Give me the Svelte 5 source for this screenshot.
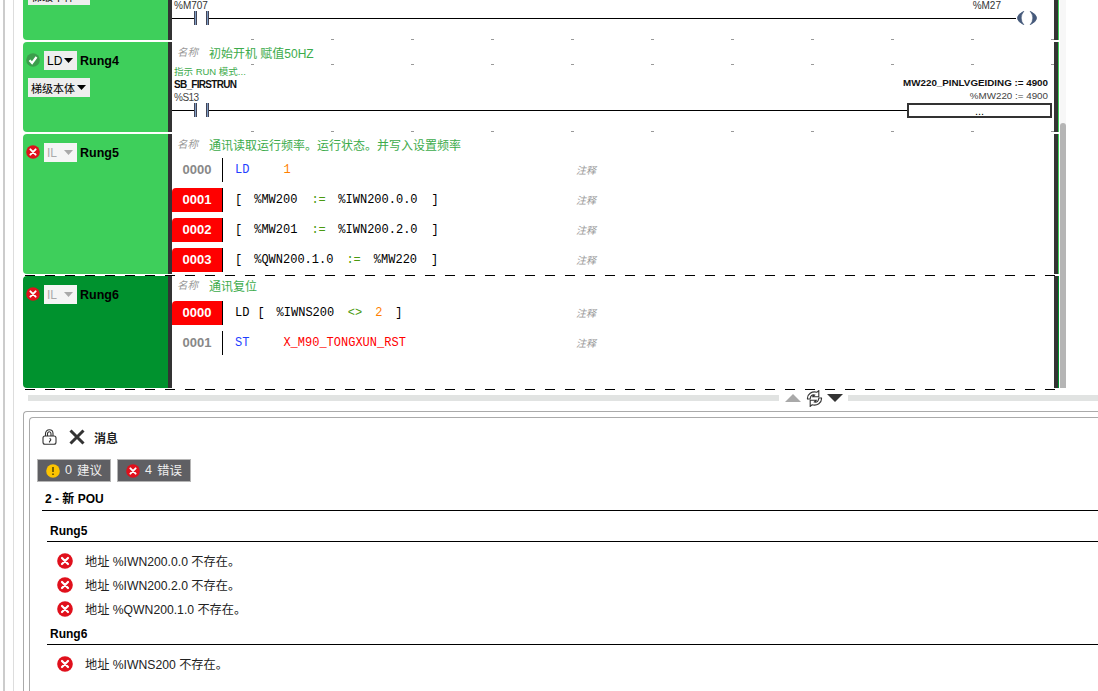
<script>
	const ticks = Array(11).fill(0);

	const rung5 = [
		{ no: '0000', bad: false, parts: [['kw', 'LD', 34], ['num', '1', 0]] },
		{ no: '0001', bad: true, parts: [['', '[', 12], ['', '%MW200', 14], ['op', ':=', 12.5], ['', '%IWN200.0.0', 14], ['', ']', 0]] },
		{ no: '0002', bad: true, parts: [['', '[', 12], ['', '%MW201', 14], ['op', ':=', 12.5], ['', '%IWN200.2.0', 14], ['', ']', 0]] },
		{ no: '0003', bad: true, parts: [['', '[', 12], ['', '%QWN200.1.0', 13], ['op', ':=', 13], ['', '%MW220', 14], ['', ']', 0]] }
	];
	const rung6 = [
		{ no: '0000', bad: true, parts: [['', 'LD', 8], ['', '[', 12], ['', '%IWNS200', 13.5], ['op', '<>', 13], ['num', '2', 13], ['', ']', 0]] },
		{ no: '0001', bad: false, parts: [['kw', 'ST', 34], ['var', 'X_M90_TONGXUN_RST', 0]] }
	];
	const errors5 = ['地址 %IWN200.0.0 不存在。', '地址 %IWN200.2.0 不存在。', '地址 %QWN200.1.0 不存在。'];
</script>

{#snippet errIcon(size)}
	<svg width={size} height={size} viewBox="0 0 16 16" class="ico">
		<circle cx="8" cy="8" r="7.8" fill="#e0101c" />
		<path d="M5 5l6 6M11 5l-6 6" stroke="#fff" stroke-width="2.2" stroke-linecap="round" />
	</svg>
{/snippet}

{#snippet caret(color)}
	<svg width="9" height="5" viewBox="0 0 9 5" class="ico"><path d="M0 0h9L4.5 5z" fill={color} /></svg>
{/snippet}

{#snippet tickRow()}
	<div class="ticks">
		{#each ticks as _}<i></i>{/each}
	</div>
{/snippet}

{#snippet contact()}
	<div class="contact"><b></b><b></b></div>
{/snippet}

{#snippet ilRows(rows)}
	{#each rows as row}
		<div class="ilrow">
			<div class="no" class:bad={row.bad}>{row.no}</div>
			<div class="code">
				{#each row.parts as p}
					<span class={p[0]} style="margin-right:{p[2]}px">{p[1]}</span>
				{/each}
			</div>
			<div class="note">注释</div>
		</div>
	{/each}
{/snippet}

<div class="page">
	<div class="guide1">
		<div class="guide2">
			<div class="editor">
				<div class="rungs">
					<!-- rung 3, scrolled partly off the top -->
					<div class="rung r3">
						<div class="side">
							<div class="sel wide clipped">梯级本体 {@render caret('#000')}</div>
						</div>
						<div class="body">
							<div class="labels3"><span>%M707</span><span>%M27</span></div>
							<div class="wire">
								<div class="seg"></div>
								{@render contact()}
								<div class="line"></div>
								<svg class="coil" width="22" height="14" viewBox="0 0 22 14">
									<path d="M8 0Q-5.5 7 8 14Q2.5 7 8 0zM14 0Q27.5 7 14 14Q19.5 7 14 0z" fill="#45597a" stroke="#45597a" stroke-width="0.5" />
								</svg>
							</div>
							{@render tickRow()}
						</div>
						<div class="rbar"></div>
					</div>

					<div class="rung r4">
						<div class="side">
							<div class="head">
								<svg width="14" height="14" viewBox="0 0 14 14" class="ico">
									<circle cx="7" cy="7" r="6.8" fill="#3b9e4c" />
									<path d="M3.5 7.2l2.6 2.8 4.4-6" stroke="#fff" stroke-width="2.2" fill="none" />
								</svg>
								<div class="sel">LD {@render caret('#000')}</div>
								<strong>Rung4</strong>
							</div>
							<div class="sel wide">梯级本体 {@render caret('#000')}</div>
						</div>
						<div class="body">
							<div class="name n4"><em>名称</em><span>初始开机 赋值50HZ</span></div>
							{@render tickRow()}
							<div class="blocklabels">
								<div class="lbl-left">
									<div class="hint">指示 RUN 模式...</div>
									<div class="sym">SB_FIRSTRUN</div>
									<div class="addr">%S13</div>
								</div>
								<div class="lbl-right">
									<div class="sym">MW220_PINLVGEIDING := 4900</div>
									<div class="addr">%MW220 := 4900</div>
								</div>
							</div>
							<div class="wire w4">
								<div class="seg"></div>
								{@render contact()}
								<div class="line"></div>
								<div class="fb">...</div>
							</div>
							{@render tickRow()}
						</div>
						<div class="rbar"></div>
					</div>

					<div class="rung r5">
						<div class="side">
							<div class="head">
								{@render errIcon(14)}
								<div class="sel off">IL {@render caret('#aaa')}</div>
								<strong>Rung5</strong>
							</div>
						</div>
						<div class="body">
							<div class="name n5"><em>名称</em><span>通讯读取运行频率。运行状态。并写入设置频率</span></div>
							{@render ilRows(rung5)}
						</div>
						<div class="rbar"></div>
					</div>

					<div class="dash"></div>

					<div class="rung r6">
						<div class="side">
							<div class="head">
								{@render errIcon(14)}
								<div class="sel off">IL {@render caret('#aaa')}</div>
								<strong>Rung6</strong>
							</div>
						</div>
						<div class="body">
							<div class="name n6"><em>名称</em><span>通讯复位</span></div>
							{@render ilRows(rung6)}
						</div>
						<div class="rbar"></div>
					</div>

					<div class="dash"></div>
				</div>

				<div class="track"><div class="thumb"></div></div>
			</div>

			<div class="splitter">
				<div class="bar b1"></div>
				<svg width="16" height="8" viewBox="0 0 16 8"><path d="M8 0l8 8H0z" fill="#a9a9a9" /></svg>
				<svg width="17" height="17" viewBox="0 0 17 17">
					<g fill="#fff" stroke="#333" stroke-width="1.1">
						<path d="M1.5 9C1 4 6 .8 11 2.2L12.8 .6V6.8H6.8L8.6 5C6 4.4 4.2 6 4.2 9z" />
						<path d="M15.5 8C16 13 11 16.2 6 14.8L4.2 16.4V10.2H10.2L8.4 12C11 12.6 12.8 11 12.8 8z" />
					</g>
				</svg>
				<svg width="16" height="8" viewBox="0 0 16 8"><path d="M0 0h16L8 8z" fill="#333" /></svg>
				<div class="bar b2"></div>
			</div>

			<div class="outer">
				<div class="inner">
					<div class="msghead">
						<svg width="15" height="16" viewBox="0 0 15 16" fill="none" stroke="#333" stroke-width="1.1">
							<path d="M3.5 7V4.5C3.5 2.3 5.2 .8 7.3 .8S11 2.3 11 4.5V7" />
							<path d="M5.5 7V4.8C5.5 3.6 6.3 2.8 7.3 2.8S9 3.6 9 4.8V7" />
							<rect x="1" y="7" width="13" height="8.3" rx="2" fill="#fff" />
							<path d="M7.5 9.5a1.3 1.3 0 1 1-.1 2.6M7.5 12v1.5" />
						</svg>
						<svg class="close" width="16" height="16" viewBox="0 0 16 16"><path d="M1.5 1.5l13 13M14.5 1.5l-13 13" stroke="#333" stroke-width="3" /></svg>
						<strong>消息</strong>
					</div>

					<div class="badges">
						<div class="badge">
							<svg width="14" height="14" viewBox="0 0 14 14" class="ico">
								<circle cx="7" cy="7" r="6.8" fill="#fdc400" />
								<path d="M7 3v5M7 9.5v1.6" stroke="#5a4a00" stroke-width="1.6" />
							</svg>
							<span>0</span><span>建议</span>
						</div>
						<div class="badge">
							{@render errIcon(14)}
							<span>4</span><span>错误</span>
						</div>
					</div>

					<div class="pou">2 - 新 POU</div>

					<div class="group g5">Rung5</div>
					<div class="msgs">
						{#each errors5 as text}
							<div class="msg">{@render errIcon(16)}<span>{text}</span></div>
						{/each}
					</div>

					<div class="group g6">Rung6</div>
					<div class="msgs">
						<div class="msg">{@render errIcon(16)}<span>地址 %IWNS200 不存在。</span></div>
					</div>
				</div>
			</div>
		</div>
	</div>
</div>

<style>
	:global(body) {
		background: #fff;
	}
	.page {
		width: 1098px;
		height: 691px;
		overflow: hidden;
		font-family: 'Liberation Sans', 'Noto Sans CJK SC', sans-serif;
		font-size: 12px;
		color: #000;
		display: flex;
	}
	.ico {
		flex: none;
		display: inline-block;
	}
	.guide1 {
		margin-left: 3px;
		border-left: 2px solid #ccc;
		padding-left: 8px;
		display: flex;
	}
	.guide2 {
		border-left: 1px solid #ddd;
		padding-left: 9px;
		display: flex;
		flex-direction: column;
		width: 1200px;
	}
	.editor {
		display: flex;
		width: 1043px;
	}
	.rungs {
		width: 1037px;
		flex: none;
	}
	.track {
		width: 6px;
		height: 388px;
		background: #f7f7f7;
		display: flex;
		flex-direction: column;
		justify-content: flex-end;
	}
	.thumb {
		height: 265px;
		background: #b5b5b5;
		border-radius: 3px 3px 0 0;
	}

	.rung {
		display: flex;
		--green: #3ecf5b;
	}
	.r3 {
		height: 40px;
		margin-bottom: 2px;
	}
	.r4 {
		height: 90px;
		margin-bottom: 2px;
	}
	.r5 {
		height: 140px;
	}
	.r6 {
		height: 112px;
		--green: #00922e;
	}
	.dash {
		height: 2px;
		padding-top: 1px;
		box-sizing: border-box;
		background: repeating-linear-gradient(90deg, #000 0 10px, transparent 10px 20px) content-box;
		background-position: 2px 0;
		width: 1035px;
	}
	.side {
		width: 145px;
		flex: none;
		background: var(--green);
		border-radius: 4px 0 0 4px;
		padding: 9px 0 0 3px;
		box-sizing: border-box;
	}
	.r3 .side {
		border-radius: 0 0 0 4px;
		padding-top: 0;
	}
	.body {
		width: 882px;
		flex: none;
		border-left: 4px solid #333;
	}
	.rbar {
		width: 4px;
		flex: none;
		background: #333;
		border-right: 1px solid var(--green);
	}
	.head {
		display: flex;
		align-items: flex-start;
		height: 19px;
	}
	.head > svg {
		margin-top: 2px;
	}
	.head strong {
		margin-left: 3px;
		margin-top: 3px;
		font-size: 12.5px;
	}
	.sel {
		display: flex;
		align-items: center;
		justify-content: space-between;
		box-sizing: border-box;
		width: 33px;
		height: 19px;
		padding: 0 4px 0 3px;
		margin-left: 4px;
		background: #eee;
		font-size: 12px;
	}
	.sel.off {
		background: #f5f5f5;
		color: #aaa;
	}
	.sel.wide {
		width: 62px;
		margin: 8px 0 0 2px;
		font-size: 11px;
	}
	.sel.clipped {
		margin-top: -14px;
	}

	.ticks {
		height: 1px;
		display: flex;
		gap: 77px;
		padding-left: 79px;
	}
	.ticks i {
		width: 3px;
		height: 1px;
		background: #999;
		flex: none;
	}
	.labels3 {
		height: 11px;
		display: flex;
		justify-content: space-between;
		padding: 0 53px 0 2px;
		font-size: 10px;
		line-height: 11px;
		color: #333;
	}
	.wire {
		height: 14px;
		display: flex;
		align-items: center;
		margin-bottom: 14px;
	}
	.seg {
		width: 22px;
		height: 1px;
		background: #000;
		flex: none;
	}
	.line {
		flex: 1;
		height: 1px;
		background: #000;
	}
	.contact {
		width: 15px;
		height: 14px;
		display: flex;
		justify-content: space-between;
		flex: none;
	}
	.contact b {
		width: 3px;
		box-sizing: border-box;
		background: #7d9dc4;
		border: 1px solid #445;
		border-width: 0 1px;
	}
	.coil {
		flex: none;
		margin-right: 16px;
	}

	.name {
		height: 22px;
		box-sizing: border-box;
		display: flex;
		align-items: center;
		padding-left: 5px;
	}
	.n4 {
		padding-bottom: 2px;
	}
	.n5 {
		height: 24px;
		padding-bottom: 4px;
	}
	.n6 {
		height: 25px;
		padding-bottom: 6px;
	}
	.name em {
		width: 32px;
		margin-top: -2px;
		font-size: 10.5px;
		color: #999;
		flex: none;
	}
	.name span {
		font-size: 12px;
		color: #3cab4b;
	}
	.blocklabels {
		height: 38px;
		display: flex;
		justify-content: space-between;
		padding: 0 6px 0 2px;
		font-size: 9.8px;
		line-height: 13px;
	}
	.hint {
		color: #3cab4b;
		font-size: 9.5px;
		height: 13px;
	}
	.sym {
		font-weight: bold;
		color: #111;
	}
	.addr {
		color: #444;
	}
	.lbl-left .sym {
		font-size: 10px;
		letter-spacing: -0.7px;
	}
	.lbl-left .addr {
		font-size: 10px;
		letter-spacing: -0.5px;
	}
	.lbl-right {
		text-align: right;
		padding-top: 11px;
	}
	.fb {
		box-sizing: border-box;
		width: 145px;
		height: 15px;
		margin-right: 2px;
		border: 2px solid #333;
		text-align: center;
		font-size: 11px;
		line-height: 12px;
		flex: none;
	}

	.ilrow {
		height: 24px;
		display: flex;
		align-items: center;
		margin-bottom: 6px;
	}
	.r5 .ilrow:first-of-type {
		margin-bottom: 5px;
	}
	.no {
		width: 50px;
		height: 24px;
		border-right: 1px solid #000;
		border-radius: 4px 0 0 0;
		text-align: center;
		line-height: 24px;
		font-size: 13px;
		font-weight: bold;
		color: #888;
		flex: none;
	}
	.no.bad {
		background: #ff0000;
		color: #fff;
	}
	.code {
		width: 341px;
		padding-left: 12px;
		display: flex;
		font-family: 'Liberation Mono', monospace;
		font-size: 12px;
		flex: none;
		white-space: pre;
	}
	.kw {
		color: #1f3fff;
	}
	.num {
		color: #ff7f00;
	}
	.op {
		color: #4b9a10;
	}
	.var {
		color: #f00;
	}
	.note {
		margin-top: -1px;
		font-size: 10px;
		font-style: italic;
		color: #999;
	}

	.splitter {
		height: 16px;
		margin: 0 0 5px 5px;
		display: flex;
		align-items: center;
		width: 1070px;
		flex: none;
	}
	.bar {
		height: 6px;
		background: #e1e3e2;
	}
	.b1 {
		width: 751px;
		margin-right: 6px;
	}
	.b2 {
		flex: 1;
		margin-left: 5px;
	}
	.splitter svg:nth-of-type(2) {
		margin: 0 4px 0 5px;
	}

	.outer {
		flex: 1;
		display: flex;
		border: 1px solid #aaa;
		border-width: 1px 0 0 1px;
		border-radius: 4px 0 0 0;
		padding: 5px 0 0 5px;
	}
	.inner {
		flex: 1;
		border: 1px solid #aaa;
		border-width: 1px 0 0 1px;
		border-radius: 4px 0 0 0;
		padding: 11px 0 0 12px;
	}
	.msghead {
		height: 16px;
		display: flex;
		align-items: center;
	}
	.close {
		margin: 0 9px 0 12px;
	}
	.msghead strong {
		font-size: 12px;
		color: #222;
	}
	.badges {
		display: flex;
		gap: 6px;
		margin: 14px 0 0 -5px;
	}
	.badge {
		box-sizing: border-box;
		width: 74px;
		height: 23px;
		background: #5f5f63;
		border: 1px solid #b5b5b5;
		display: flex;
		align-items: center;
		gap: 5px;
		padding: 0 0 2px 8px;
		color: #eee;
		font-size: 12.5px;
	}
	.badge > svg {
		margin-top: 2px;
	}
	.pou {
		margin-top: 10px;
		height: 19px;
		line-height: 15px;
		box-sizing: border-box;
		padding-left: 3px;
		border-bottom: 1px solid #000;
		font-weight: bold;
		font-size: 12px;
	}
	.group {
		margin-left: 5px;
		padding-left: 3px;
		height: 19px;
		line-height: 16px;
		box-sizing: border-box;
		border-bottom: 1px solid #000;
		font-weight: bold;
		font-size: 12px;
	}
	.g5 {
		margin-top: 12px;
	}
	.g6 {
		margin-top: 5px;
	}
	.msgs {
		margin: 7px 0 0 15px;
	}
	.msg {
		height: 24px;
		display: flex;
		align-items: center;
		gap: 12px;
		color: #222;
		font-size: 12.2px;
	}
</style>
